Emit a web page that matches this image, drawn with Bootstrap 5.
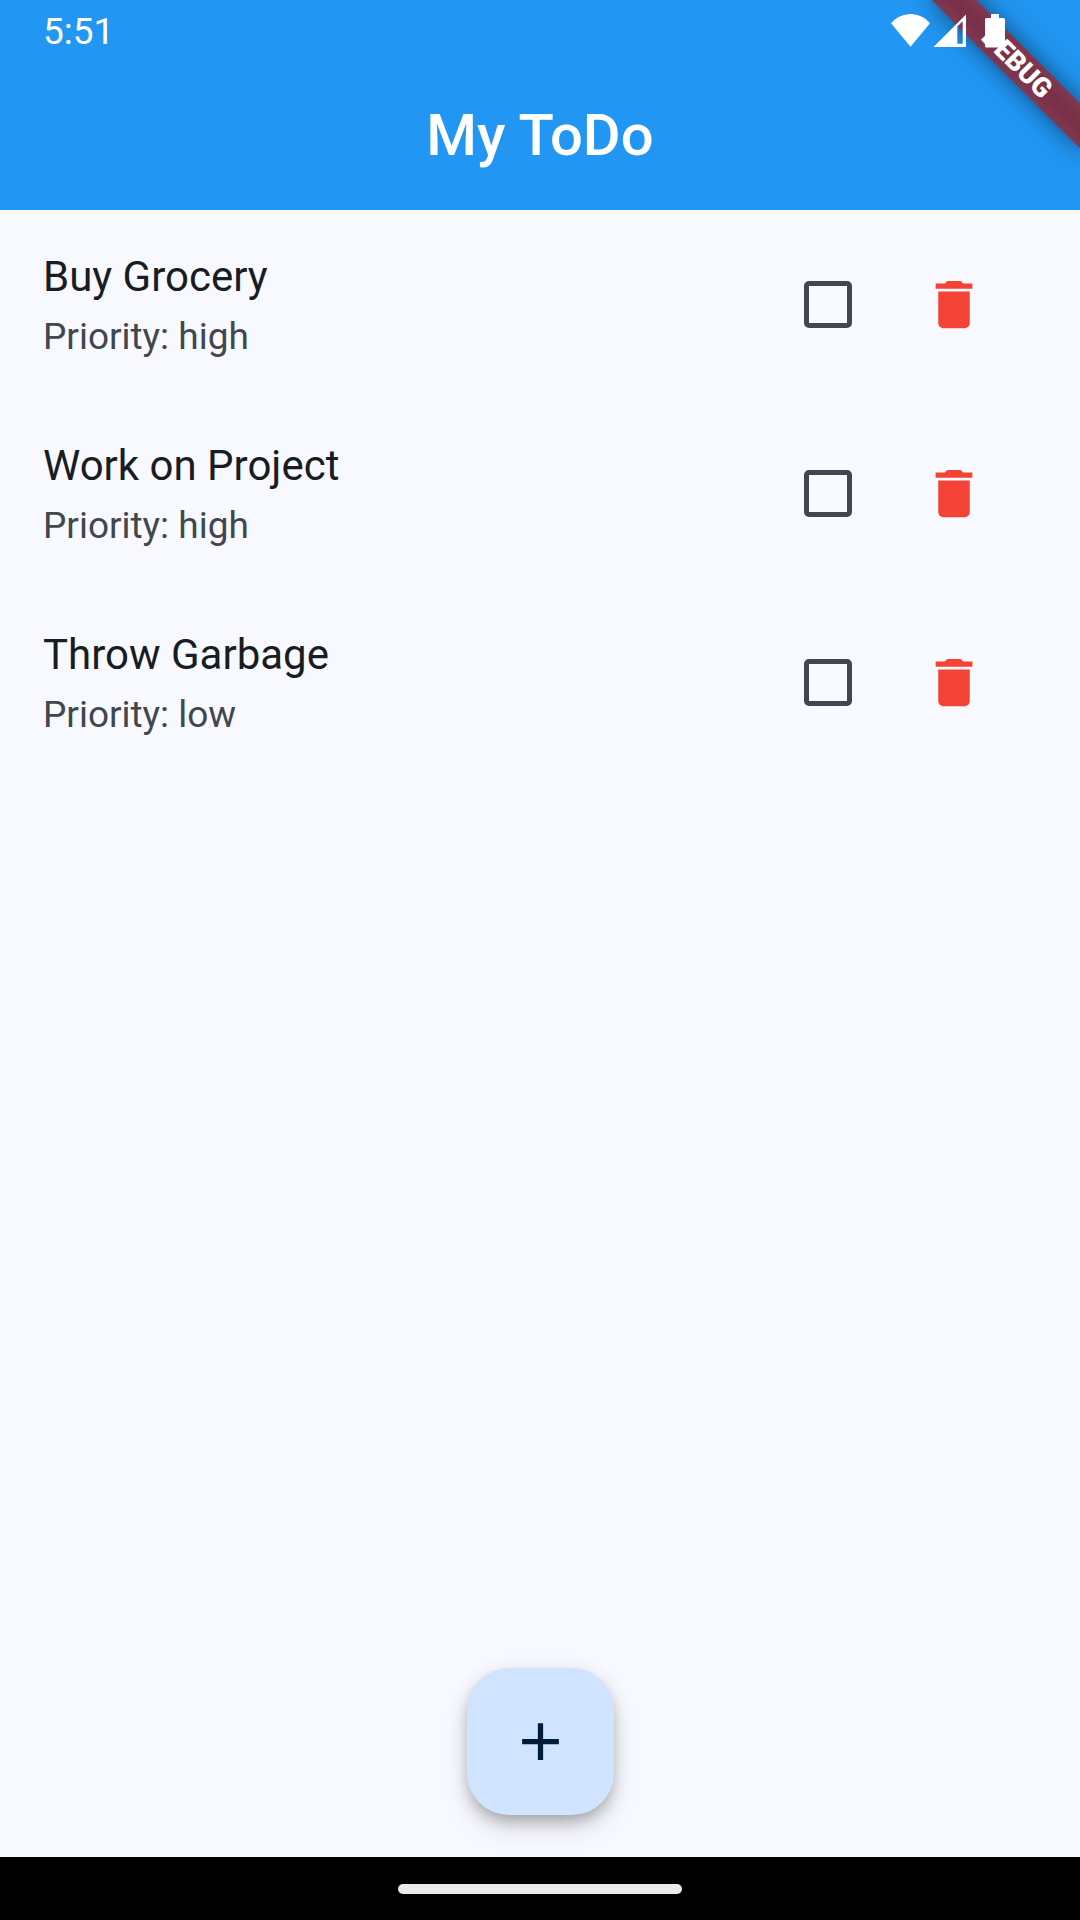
<!DOCTYPE html>
<html lang="en">
<head>
<meta charset="utf-8">
<meta name="viewport" content="width=device-width, initial-scale=1">
<title>My ToDo</title>
<link href="https://cdn.jsdelivr.net/npm/bootstrap@5.3.0/dist/css/bootstrap.min.css" rel="stylesheet">
<style>
  body { font-family: Roboto, "Liberation Sans", sans-serif; background: #f8f9ff; color: #191c20; }
  .app-header { background: #2196f3; color: #fff; }
  .status-bar { height: 63px; padding: 0 75px 0 43px; font-size: 37px; line-height: 63px; z-index: 2; }
  .status-icons { gap: 3px; }
  .app-title { height: 147px; padding-bottom: 4px; font-size: 58px; line-height: 74px; font-weight: 500; }
  /* Corner ribbon */
  .ribbon-clip { width: 210px; height: 210px; pointer-events: none; z-index: 1; }
  .ribbon { top: 47px; right: -42px; width: 210px; height: 32px; transform: rotate(45deg);
    background: linear-gradient(#7f3856, #7a3146 40%, #7a3146 60%, #7f3856);
    box-shadow: 0 0 24px rgba(0,0,0,.5); font-size: 27px; line-height: 32px; font-weight: 900; }
  /* Task rows */
  .task { padding: 36px 63px 36px 43px; }
  .task-name { font-size: 42px; line-height: 61px; cursor: pointer; }
  .task-note { margin-top: 3px; font-size: 37px; line-height: 53px; color: #42474e; }
  .hit { width: 126px; height: 116px; }
  .task-check { appearance: none; width: 48px; height: 47px; border: 5px solid #42474e; border-radius: 5px; background: transparent; margin: 0; }
  .task-check:checked { background: #42474e; }
  .trash { color: #f44336; }
  .fab-area { padding-bottom: 42px; }
  .fab { width: 147px; height: 147px; border-radius: 42px; background: #d1e4ff; color: #001d36;
    box-shadow: 0 8px 13px -3px rgba(0,0,0,.2), 0 14px 24px rgba(0,0,0,.13), 0 3px 20px rgba(0,0,0,.08); }
  .fab:hover { background: #c3dafa; color: #001d36; }
  .gesture-bar { height: 63px; background: #000; padding-top: 27px; }
  .gesture-pill { width: 284px; height: 10px; border-radius: 5px; background: #ebebeb; }
</style>
</head>
<body class="d-flex flex-column min-vh-100">
  <header class="app-header position-relative">
    <div class="status-bar d-flex justify-content-between align-items-center position-relative">
      <span>5:51</span>
      <div class="status-icons d-flex" aria-hidden="true">
        <svg width="39" height="35" viewBox="0 0 39 35" fill="#fff"><path d="M0 9.200C5 3.500 12 0 19.500 0S34 3.500 39 9.200L19.500 32.700z"/></svg>
        <svg width="33" height="35" viewBox="0 0 33 35" fill="#fff"><path fill-rule="evenodd" d="M.5 33L33 .5V33zM24.300 12.500V29.700H29.700V7.200z"/></svg>
        <svg width="36" height="35" viewBox="0 0 36 35" fill="#fff"><path d="M22 0h8v4h4.500a1.500 1.500 0 0 1 1.500 1.500v26.500a1.500 1.500 0 0 1-1.500 1.500h-17a1.500 1.500 0 0 1-1.500-1.500V5.500a1.500 1.500 0 0 1 1.500-1.500H22z"/></svg>
      </div>
    </div>
    <h1 class="app-title d-flex justify-content-center align-items-center m-0">My ToDo</h1>
    <div class="ribbon-clip position-absolute top-0 end-0 overflow-hidden">
      <div class="ribbon position-absolute text-center">DEBUG</div>
    </div>
  </header>

  <main class="flex-grow-1">
    <ul class="list-unstyled m-0">
      <li class="task d-flex align-items-center">
        <div class="flex-grow-1">
          <label class="task-name d-block" for="task1">Buy Grocery</label>
          <div class="task-note">Priority: high</div>
        </div>
        <div class="hit d-flex justify-content-center align-items-center"><input class="task-check" type="checkbox" id="task1"></div>
        <button type="button" class="hit btn trash border-0 p-0 d-flex justify-content-center align-items-center" aria-label="Delete Buy Grocery">
          <svg width="64" height="63" viewBox="0 0 24 24" fill="currentColor"><path d="M6 19c0 1.100.9 2 2 2h8c1.100 0 2-.9 2-2V7H6v12zM19 4h-3.500l-1-1h-5l-1 1H5v2h14V4z"/></svg>
        </button>
      </li>
      <li class="task d-flex align-items-center">
        <div class="flex-grow-1">
          <label class="task-name d-block" for="task2">Work on Project</label>
          <div class="task-note">Priority: high</div>
        </div>
        <div class="hit d-flex justify-content-center align-items-center"><input class="task-check" type="checkbox" id="task2"></div>
        <button type="button" class="hit btn trash border-0 p-0 d-flex justify-content-center align-items-center" aria-label="Delete Work on Project">
          <svg width="64" height="63" viewBox="0 0 24 24" fill="currentColor"><path d="M6 19c0 1.100.9 2 2 2h8c1.100 0 2-.9 2-2V7H6v12zM19 4h-3.500l-1-1h-5l-1 1H5v2h14V4z"/></svg>
        </button>
      </li>
      <li class="task d-flex align-items-center">
        <div class="flex-grow-1">
          <label class="task-name d-block" for="task3">Throw Garbage</label>
          <div class="task-note">Priority: low</div>
        </div>
        <div class="hit d-flex justify-content-center align-items-center"><input class="task-check" type="checkbox" id="task3"></div>
        <button type="button" class="hit btn trash border-0 p-0 d-flex justify-content-center align-items-center" aria-label="Delete Throw Garbage">
          <svg width="64" height="63" viewBox="0 0 24 24" fill="currentColor"><path d="M6 19c0 1.100.9 2 2 2h8c1.100 0 2-.9 2-2V7H6v12zM19 4h-3.500l-1-1h-5l-1 1H5v2h14V4z"/></svg>
        </button>
      </li>
    </ul>
  </main>

  <div class="fab-area d-flex justify-content-center">
    <button type="button" class="fab btn border-0 p-0 d-flex justify-content-center align-items-center" aria-label="Add task">
      <svg width="63" height="63" viewBox="0 0 24 24" fill="currentColor"><path d="M19 13h-6v6h-2v-6H5v-2h6V5h2v6h6z"/></svg>
    </button>
  </div>
  <div class="gesture-bar d-flex justify-content-center"><div class="gesture-pill"></div></div>

<script src="https://cdn.jsdelivr.net/npm/bootstrap@5.3.0/dist/js/bootstrap.bundle.min.js"></script>
</body>
</html>
